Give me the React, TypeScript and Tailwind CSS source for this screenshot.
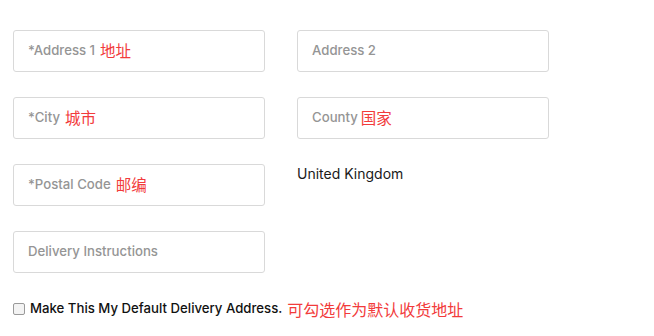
const cjk = '"Noto Sans CJK SC", sans-serif'

function Field({ label, note, gap = 'ml-1.5' }: { label: string; note?: string; gap?: string }) {
    return (
        <div className="flex h-[42px] w-[252px] items-center rounded-[3px] border border-[#d9d9d9] bg-white px-[14px] pb-[1px]">
            <span className="text-[13.2px] font-medium text-[#959595]">{label}</span>
            {note && <span className={`${gap} text-[15.5px] text-[#f23b3b]`} style={{ fontFamily: cjk }}>{note}</span>}
        </div>
    )
}

export default function App() {
    return (
        <div className="h-[336px] w-[654px] bg-white pl-[13px] pt-[30px]" style={{ fontFamily: 'Inter, sans-serif' }}>
            <div className="grid grid-cols-[252px_252px] gap-x-[32px] gap-y-[25px]">
                <Field label="*Address 1" note="地址" gap="ml-[5px]" />
                <Field label="Address 2" />
                <Field label="*City" note="城市" gap="ml-[5px]" />
                <Field label="County" note="国家" gap="ml-[3px]" />
                <Field label="*Postal Code" note="邮编" gap="ml-[5px]" />
                <div className="-mt-[1px] text-[14px] text-[#1a1a1a]">United Kingdom</div>
                <Field label="Delivery Instructions" />
            </div>
            <div className="mt-[24px] flex items-center">
                <span className="h-[12px] w-[12px] rounded-[2px] border border-[#9a9a9a] bg-[#f3f3f3]" />
                <span className="ml-[5px] text-[13.2px] font-medium text-[#111]">Make This My Default Delivery Address.</span>
                <span className="ml-[5px] text-[16px] text-[#f23b3b]" style={{ fontFamily: cjk }}>可勾选作为默认收货地址</span>
            </div>
        </div>
    )
}
